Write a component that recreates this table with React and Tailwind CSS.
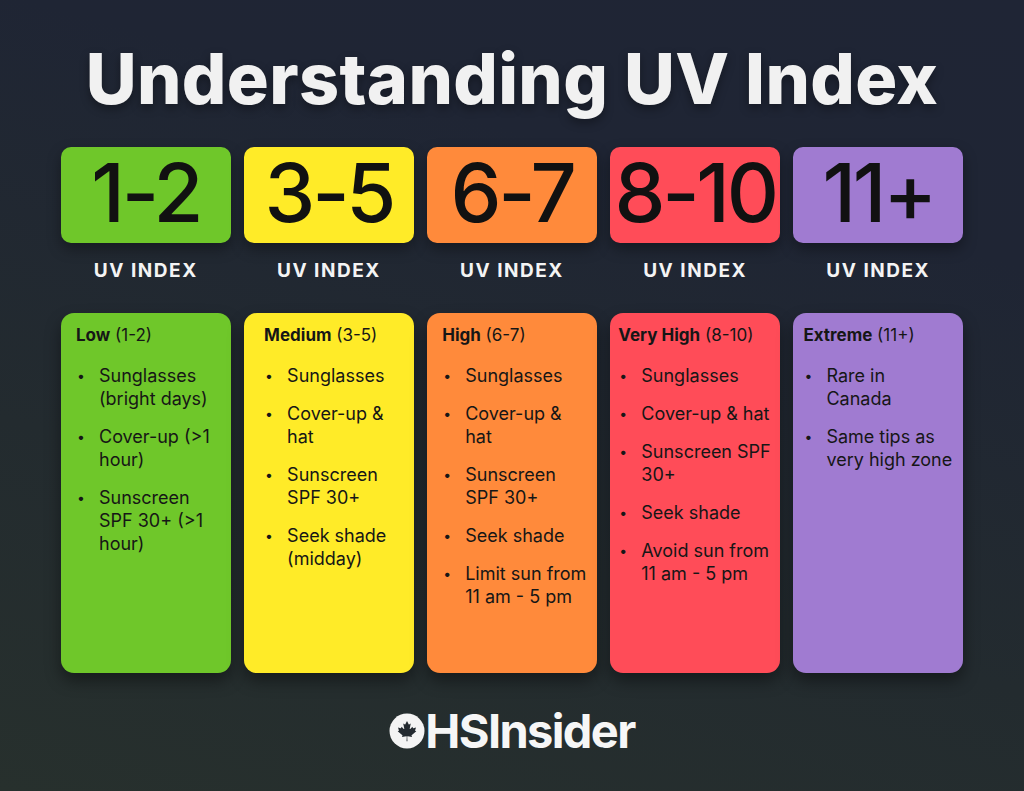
import React from "react";

const cols = [
  {
    range: "1-2",
    bg: "bg-[#6fc72a]",
    pad: "pl-[15px]",
    title: "Low",
    sub: "(1-2)",
    items: [["Sunglasses", "(bright days)"], ["Cover-up (>1", "hour)"], ["Sunscreen", "SPF 30+ (>1", "hour)"]],
  },
  {
    range: "3-5",
    bg: "bg-[#ffeb28]",
    pad: "pl-[20px]",
    title: "Medium",
    sub: "(3-5)",
    items: [["Sunglasses"], ["Cover-up &", "hat"], ["Sunscreen", "SPF 30+"], ["Seek shade", "(midday)"]],
  },
  {
    range: "6-7",
    bg: "bg-[#ff8a3b]",
    pad: "pl-[15px]",
    title: "High",
    sub: "(6-7)",
    items: [["Sunglasses"], ["Cover-up &", "hat"], ["Sunscreen", "SPF 30+"], ["Seek shade"], ["Limit sun from", "11 am - 5 pm"]],
  },
  {
    range: "8-10",
    bg: "bg-[#ff4c58]",
    pad: "pl-[8px]",
    title: "Very High",
    sub: "(8-10)",
    items: [["Sunglasses"], ["Cover-up & hat"], ["Sunscreen SPF", "30+"], ["Seek shade"], ["Avoid sun from", "11 am - 5 pm"]],
  },
  {
    range: "11+",
    bg: "bg-[#a07bd1]",
    pad: "pl-[10px]",
    title: "Extreme",
    sub: "(11+)",
    items: [["Rare in", "Canada"], ["Same tips as", "very high zone"]],
  },
];

function Leaf() {
  return (
    <svg width="36" height="36" viewBox="0 0 36 36" className="shrink-0">
      <circle cx="18" cy="18" r="17.5" fill="#f4f4f4" />
      <svg x="8" y="5" width="20" height="26" viewBox="-2000 -2050 4000 4100">
        <path
          fill="#232a30"
          d="m-90 2030 45-863a95 95 0 0 0-111-98l-859 151 116-320a65 65 0 0 0-20-73l-941-762 212-99a65 65 0 0 0 34-79l-186-572 542 115a65 65 0 0 0 73-38l105-247 423 454a65 65 0 0 0 111-57l-204-1052 327 189a65 65 0 0 0 91-27l332-652 332 652a65 65 0 0 0 91 27l327-189-204 1052a65 65 0 0 0 111 57l423-454 105 247a65 65 0 0 0 73 38l542-115-186 572a65 65 0 0 0 34 79l212 99-941 762a65 65 0 0 0-20 73l116 320-859-151a95 95 0 0 0-111 98l45 863z"
        />
      </svg>
    </svg>
  );
}

export default function App() {
  return (
    <div className="w-[1024px] h-[791px] overflow-hidden flex flex-col items-center font-['Inter',sans-serif] bg-[linear-gradient(15deg,#27302d_0%,#232b2f_35%,#1f2534_75%,#1f2535_100%)]">
      <h1 className="mt-[44px] text-[70px] leading-none font-extrabold tracking-[0.005em] text-[#f1f1f1] [text-shadow:0_4px_10px_rgba(0,0,0,0.35)]">
        Understanding UV Index
      </h1>
      <div className="mt-[33px] grid grid-cols-5 gap-x-[13.5px] w-[902px]">
        {cols.map((c) => (
          <div key={c.range} className="flex flex-col">
            <div
              className={`h-[96px] rounded-[10px] ${c.bg} flex items-center justify-center shadow-[0_6px_14px_rgba(0,0,0,0.35)]`}
            >
              <span className="text-[81px] leading-none font-medium tracking-[-0.04em] text-[#111111] -mt-[4px]">
                {c.range}
              </span>
            </div>
            <div className="mt-[18px] text-center text-[19px] leading-none font-bold tracking-[0.08em] text-[#f4f4f4]">
              UV INDEX
            </div>
            <div
              className={`mt-[33px] h-[360px] rounded-[13px] ${c.bg} ${c.pad} pt-[11px] text-[#161616] shadow-[0_8px_16px_rgba(0,0,0,0.4)]`}
            >
              <div className="text-[17px] leading-[23px] whitespace-nowrap">
                <span className="font-bold">{c.title}</span> {c.sub}
              </div>
              <ul className="mt-[17px] flex flex-col gap-[15px]">
                {c.items.map((lines, i) => (
                  <li key={i} className="flex text-[18px] leading-[23px]">
                    <span className="w-[23px] shrink-0 pl-[1px] text-[14px]">•</span>
                    <span className="whitespace-nowrap">
                      {lines.map((l, j) => (
                        <React.Fragment key={j}>
                          {j > 0 && <br />}
                          {l}
                        </React.Fragment>
                      ))}
                    </span>
                  </li>
                ))}
              </ul>
            </div>
          </div>
        ))}
      </div>
      <div className="mt-[34px] flex items-center">
        <Leaf />
        <span className="text-[47px] leading-none font-bold tracking-[-0.035em] text-[#f6f6f6]">HSInsider</span>
      </div>
    </div>
  );
}
